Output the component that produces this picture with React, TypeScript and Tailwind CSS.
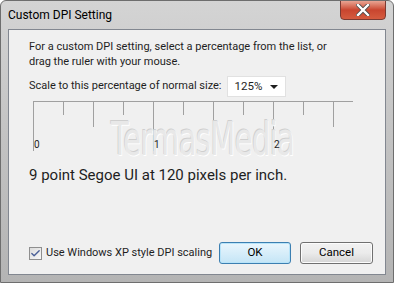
import { Check } from "lucide-react";

const ticks = [
  { x: 32, len: 50 },
  { x: 62, len: 14 },
  { x: 92, len: 26 },
  { x: 122, len: 14 },
  { x: 152, len: 50 },
  { x: 182, len: 14 },
  { x: 212, len: 26 },
  { x: 242, len: 14 },
  { x: 272, len: 50 },
  { x: 302, len: 14 },
  { x: 332, len: 26 },
];

function Ruler() {
  return (
    <svg width="394" height="60" className="block" style={{ marginLeft: -8 }}>
      <line x1="32" y1="0.5" x2="352" y2="0.5" stroke="#a0a0a0" strokeWidth="1" />
      {ticks.map((t) => (
        <line key={t.x} x1={t.x + 0.5} y1="0" x2={t.x + 0.5} y2={t.len} stroke="#a0a0a0" strokeWidth="1" />
      ))}
    </svg>
  );
}

export default function App() {
  const ui = { fontFamily: 'Roboto, "Liberation Sans", sans-serif' };
  return (
    <div
      className="relative w-[394px] h-[283px] overflow-hidden rounded-t-[6px] border border-[#6e6e6e] bg-gradient-to-b from-[#d4d4d4] via-[#c2c2c2] to-[#b4b4b4] flex flex-col whitespace-nowrap"
      style={ui}
    >
      {/* title bar */}
      <div className="h-[28px] flex items-start relative">
        <span className="ml-[7px] mt-[6px] text-[12px] leading-[16px] text-black">Custom DPI Setting</span>
        <div className="absolute right-[7px] top-[-1px] w-[46px] h-[20px] rounded-b-[4px] border border-[#7b3a32] bg-gradient-to-b from-[#e8a493] via-[#c9452f] to-[#d55b3f] flex items-center justify-center">
          <svg width="14" height="12" viewBox="0 0 14 12">
            <path d="M2 1 L12 11 M12 1 L2 11" stroke="#4a4a4a" strokeWidth="4" strokeLinecap="square" />
            <path d="M2 1 L12 11 M12 1 L2 11" stroke="#ffffff" strokeWidth="2.4" strokeLinecap="square" />
          </svg>
        </div>
      </div>

      {/* client area */}
      <div className="relative mx-[7px] mb-[7px] flex-1 border border-[#828790] bg-[#f0f0f0] text-[#1e1e1e]">
        <div className="pl-[20px] pt-[9px] text-[11px] leading-[15px]">
          <p>For a custom DPI setting, select a percentage from the list, or</p>
          <p>drag the ruler with your mouse.</p>
        </div>

        <div className="pl-[20px] mt-[7px] flex items-center gap-[5px] text-[11px]">
          <span>Scale to this percentage of normal size:</span>
          <div className="w-[59px] h-[21px] bg-white border border-[#e1e1e1] flex items-center justify-between pl-[7px] pr-[7px] text-[11.5px]">
            <span>125%</span>
            <svg width="8" height="4" viewBox="0 0 8 4">
              <path d="M0 0 H8 L4 4 Z" fill="#1e1e1e" />
            </svg>
          </div>
        </div>

        <div className="relative mt-[4px] h-[52px]">
          <Ruler />
          <span
            className="absolute left-[102px] top-[20px] text-[46px] leading-[36px] text-[#e8e8e8] tracking-[-1px] scale-x-[0.63] origin-left"
            style={{ fontFamily: '"DejaVu Sans", sans-serif', textShadow: "1px 1px 0 #ffffff, -1px -1px 0 #cfcfcf" }}
          >
            TermasMedia
          </span>
          <span className="absolute left-[25px] top-[38px] text-[10px] leading-[12px]">0</span>
          <span className="absolute left-[145px] top-[38px] text-[10px] leading-[12px]">1</span>
          <span className="absolute left-[265px] top-[38px] text-[10px] leading-[12px]">2</span>
        </div>

        <p className="pl-[20px] mt-[12px] text-[15px] leading-[20px]">9 point Segoe UI at 120 pixels per inch.</p>

        <div className="absolute left-[20px] right-[12px] bottom-[10px] flex items-center">
          <div className="w-[13px] h-[13px] border border-[#8f8f8f] bg-gradient-to-br from-[#dcdcdc] to-[#f8f8f8] flex items-center justify-center">
            <Check size={11} strokeWidth={3} className="text-[#4a5f97]" />
          </div>
          <span className="ml-[4px] text-[11px]">Use Windows XP style DPI scaling</span>
          <div className="ml-auto flex gap-[9px]">
            <button className="w-[72px] h-[22px] rounded-[3px] border border-[#3c7fb1] bg-gradient-to-b from-[#eaf6fd] to-[#c4e5f6] text-[11.5px] text-black shadow-[inset_0_0_0_1px_#b8e4f9]">
              OK
            </button>
            <button className="w-[73px] h-[22px] rounded-[3px] border border-[#707070] bg-gradient-to-b from-[#f2f2f2] via-[#ebebeb] to-[#d5d5d5] text-[11.5px] text-black shadow-[inset_0_0_0_1px_#fcfcfc]">
              Cancel
            </button>
          </div>
        </div>
      </div>
    </div>
  );
}
